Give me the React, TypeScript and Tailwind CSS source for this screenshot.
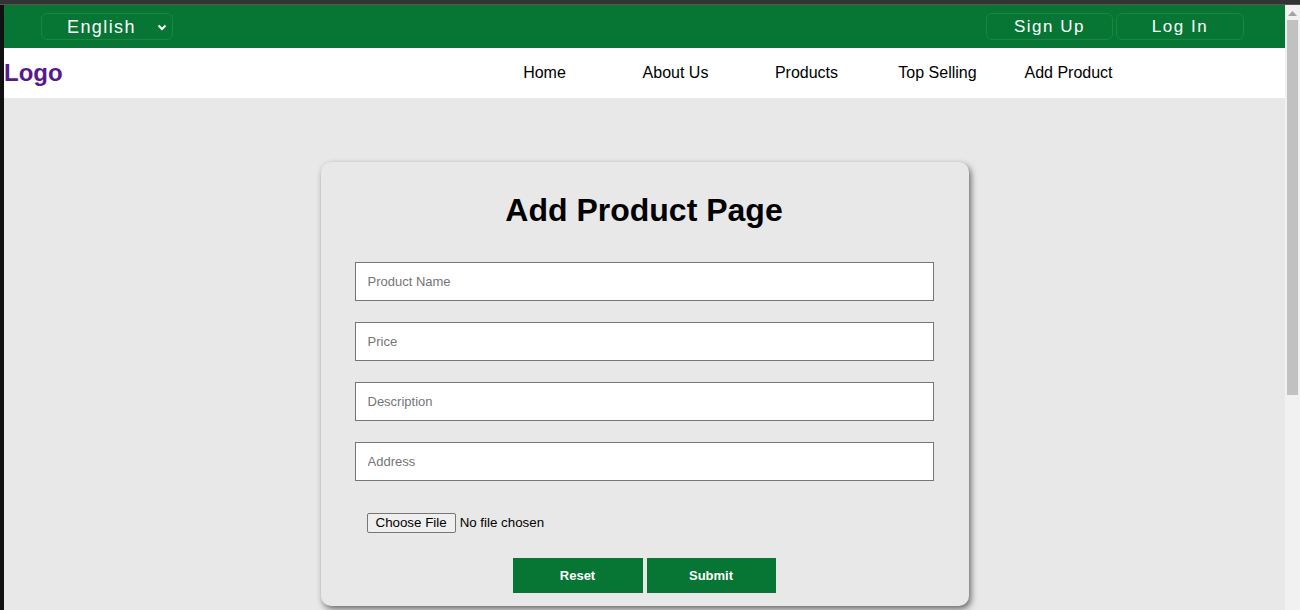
import React from 'react';

const navLinks = ['Home', 'About Us', 'Products', 'Top Selling', 'Add Product'];
const fields = ['Product Name', 'Price', 'Description', 'Address'];

const TopBar: React.FC = () => (
  <div className="h-[43px] bg-[#077533] flex items-center justify-between pl-[37px] pr-[41px]">
    <div className="w-[132px] h-[27px] border border-[#19873f] rounded-[6px] flex items-center pl-[25px] pr-[5px] pt-[1px] text-white text-[18px] tracking-[1.4px]">
      <span className="flex-1">English</span>
      <svg width="10" height="7" viewBox="0 0 10 7" className="mt-[1px]">
        <path d="M1.5 1.5 L5 5 L8.5 1.5" stroke="white" strokeWidth="2" fill="none" />
      </svg>
    </div>
    <div className="flex gap-[3px]">
      <button className="w-[127px] h-[27px] border border-[#19873f] rounded-[6px] text-white text-[17px] tracking-[1.5px]">
        Sign Up
      </button>
      <button className="w-[128px] h-[27px] border border-[#19873f] rounded-[6px] text-white text-[17px] tracking-[1.5px]">
        Log In
      </button>
    </div>
  </div>
);

const NavBar: React.FC = () => (
  <div className="h-[50px] bg-white flex items-center">
    <div className="text-[#561a8c] text-[24px] font-bold w-[475px]">Logo</div>
    <div className="flex">
      {navLinks.map((l) => (
        <a key={l} className="w-[131px] text-center text-[16px] text-black">
          {l}
        </a>
      ))}
    </div>
  </div>
);

const AddProductCard: React.FC = () => (
  <div className="w-[648px] mx-auto mt-[64px] bg-[#e8e8e8] rounded-[10px] shadow-[2px_3px_6px_rgba(0,0,0,0.55)] pl-[34px] pr-[35px] pt-[30px] pb-[13px]">
    <h1 className="text-center text-[32px] font-bold text-black leading-[37px] mb-[33px]">Add Product Page</h1>
    <div className="flex flex-col gap-[21px]">
      {fields.map((f) => (
        <input
          key={f}
          placeholder={f}
          className="h-[39px] w-full bg-white border border-[#767676] px-[12px] text-[13px] placeholder:text-[#757575] outline-none"
        />
      ))}
    </div>
    <div className="mt-[32px] ml-[12px] h-[20px] flex items-center text-[13.33px] text-black">
      <input
        type="file"
        className="text-[13.33px] leading-[18px] file:h-[20px] file:bg-[#efefef] file:border file:border-[#767676] file:rounded-[2px] file:px-[8px] file:py-0 file:mr-[4px] file:text-black"
      />
    </div>
    <div className="flex justify-center gap-[4px] mt-[25px]">
      <button className="w-[130px] h-[35px] bg-[#077533] text-white text-[13px] font-bold">Reset</button>
      <button className="w-[129px] h-[35px] bg-[#077533] text-white text-[13px] font-bold">Submit</button>
    </div>
  </div>
);

export default function App() {
  return (
    <div className="w-[1300px] h-[610px] overflow-hidden bg-[#333333] flex flex-col font-['Liberation_Sans',Arial,sans-serif]">
      <div className="h-[4px] bg-[#333333]" />
      <div className="h-[1px] bg-[#555555]" />
      <div className="flex flex-1 min-h-0">
        <div className="w-[4px] bg-[#111111]" />
        <div className="flex-1 bg-[#e8e8e8] overflow-hidden">
          <TopBar />
          <NavBar />
          <AddProductCard />
        </div>
        <div className="w-[15px] bg-[#f1f1f1] flex flex-col items-center">
          <svg width="9" height="5" viewBox="0 0 9 5" className="mt-[6px]">
            <path d="M0 5 L4.5 0 L9 5 Z" fill="#a3a3a3" />
          </svg>
          <div className="w-[11px] h-[375px] bg-[#c1c1c1] mt-[4px]" />
        </div>
      </div>
    </div>
  );
}
